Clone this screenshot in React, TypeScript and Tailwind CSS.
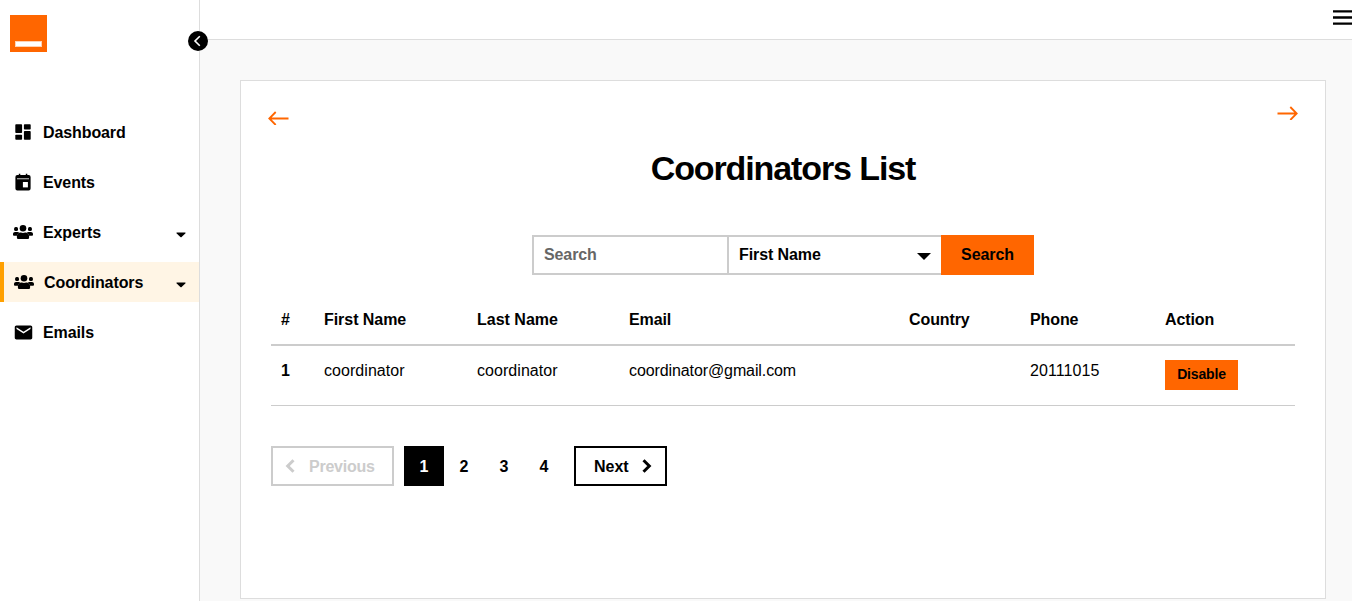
import React from "react";
import { MdEmail } from "react-icons/md";

function DashboardIcon() {
  return (
    <svg width="20" height="20" viewBox="0 0 20 20">
      <rect x="2.300" y="2.300" width="6.800" height="8.700" rx=".8" />
      <rect x="2.300" y="12.700" width="6.800" height="5" rx=".8" />
      <rect x="10.900" y="2.300" width="6.800" height="5.200" rx=".8" />
      <rect x="10.900" y="9.100" width="6.800" height="8.600" rx=".8" />
    </svg>
  );
}

function CalendarIcon() {
  return (
    <svg width="20" height="20" viewBox="0 0 20 20">
      <path d="M4.500 3h11a2 2 0 0 1 2.100 2v11.400a2 2 0 0 1-2.100 2h-11a2 2 0 0 1-2.100-2V5a2 2 0 0 1 2.100-2Z" />
      <path d="M5.800 1.700h1.500v2H5.800zM12.800 1.700h1.500v2h-1.500z" />
      <path d="M4 6.200h12v1.100H4z" fill="#bbb" />
      <path d="M9.900 10h5v5.400h-5z" fill="white" />
    </svg>
  );
}

function GroupIcon() {
  return (
    <svg width="20" height="20" viewBox="0 0 20 20">
      <circle cx="10" cy="6.300" r="3.300" />
      <rect x="1.100" y="5" width="3.900" height="3.900" rx="1.500" />
      <rect x="15" y="5" width="3.900" height="3.900" rx="1.500" />
      <path d="M2 10h2.600c.7 0 1.300.3 1.600.7C5 11.400 4.200 12.500 4 13.700H.9c-.6 0-.9-.3-.9-.9V12c0-1.100.9-2 2-2ZM18 10h-2.600c-.7 0-1.300.3-1.600.7 1.200.7 2 1.800 2.200 3h3.100c.6 0 .9-.3.9-.9V12c0-1.100-.9-2-2-2Z" />
      <path d="M7.500 10.500h.4c1.300.6 2.900.6 4.200 0h.4c2 0 3.600 1.600 3.600 3.600v1.300c0 .9-.7 1.600-1.600 1.600h-9c-.9 0-1.600-.7-1.600-1.600v-1.300c0-2 1.600-3.600 3.600-3.600Z" />
    </svg>
  );
}

type NavItem = {
  label: string;
  icon: React.ReactNode;
  expandable?: boolean;
  active?: boolean;
};

const navItems: NavItem[] = [
  { label: "Dashboard", icon: <DashboardIcon /> },
  { label: "Events", icon: <CalendarIcon /> },
  { label: "Experts", icon: <GroupIcon />, expandable: true },
  { label: "Coordinators", icon: <GroupIcon />, expandable: true, active: true },
  { label: "Emails", icon: <MdEmail size={21} className="-mr-px" /> },
];

function Caret() {
  return (
    <svg width="10" height="6" viewBox="0 0 10 6">
      <path d="M1 .5h8c.5 0 .7.6.3 1L5.600 5a.9.9 0 0 1-1.200 0L.7 1.500C.3 1.100.500.500 1 .500Z" />
    </svg>
  );
}

function Sidebar() {
  return (
    <aside className="relative w-[200px] shrink-0 border-r border-[#ddd] bg-white pt-[15px]">
      <div className="ml-[10px] flex h-[37px] w-[37px] items-end justify-center bg-[#ff6600] pb-[5px]">
        <div className="h-[6px] w-[27px] border border-[#ffd1b3] bg-white" />
      </div>
      <button className="absolute top-[31px] left-[188px] flex h-5 w-5 items-center justify-center rounded-full bg-black">
        <svg width="20" height="20" viewBox="0 0 20 20" fill="none" stroke="white" strokeWidth="1.6">
          <path d="M11.800 5.300 7 10l4.800 4.700" />
        </svg>
      </button>
      <nav className="mt-[60px] flex flex-col gap-[10px]">
        {navItems.map((item) => (
          <a
            key={item.label}
            className={
              "flex h-10 items-center " +
              (item.active ? "border-l-4 border-[#ffa000] bg-[#fff5e5] pl-[10px]" : "pl-[13px]")
            }
          >
            {item.icon}
            <span className="ml-[10px] flex-1 pt-0.5 text-[16px] leading-6 font-bold">{item.label}</span>
            {item.expandable && (
              <span className="mt-[5px] mr-[13px]">
                <Caret />
              </span>
            )}
          </a>
        ))}
      </nav>
    </aside>
  );
}

function SearchBar() {
  return (
    <div className="ml-[261px] flex h-10 w-[502px] font-bold">
      <div className="flex w-[197px] items-center border-2 border-[#ccc] pl-[10px] text-[#666]">
        <span>Search</span>
      </div>
      <div className="flex w-[212px] items-center justify-between border-y-2 border-[#ccc] pr-[10px] pl-[10px]">
        <span>First Name</span>
        <svg width="14" height="7" viewBox="0 0 14 7" className="mt-0.5">
          <path d="M0 0h14L7 7Z" />
        </svg>
      </div>
      <button className="flex flex-1 items-center justify-center bg-[#ff6600] font-bold">
        <span>Search</span>
      </button>
    </div>
  );
}

const columns = "grid grid-cols-[43px_153px_152px_280px_121px_135px_140px]";

function CoordinatorsTable() {
  return (
    <div className="mt-[25px] w-[1024px]">
      <div className={columns + " h-[46px] border-b-2 border-[#ccc] pt-[8px] pl-[10px] leading-6 font-bold"}>
        <span>#</span>
        <span className="tracking-[-0.05px]">First Name</span>
        <span className="tracking-normal">Last Name</span>
        <span>Email</span>
        <span>Country</span>
        <span>Phone</span>
        <span>Action</span>
      </div>
      <div className={columns + " h-[60px] border-b border-[#ccc] pt-[13px] pl-[10px] leading-6"}>
        <span className="font-bold">1</span>
        <span className="tracking-[0.05px]">coordinator</span>
        <span className="tracking-[0.05px]">coordinator</span>
        <span className="tracking-[-0.1px]">coordinator@gmail.com</span>
        <span />
        <span className="tracking-[0.1px]">20111015</span>
        <button className="mt-[1px] flex h-[30px] w-[73px] items-center justify-center bg-[#ff6600] text-[14px] font-bold tracking-[-0.15px]">
          <span className="-mt-0.5">Disable</span>
        </button>
      </div>
    </div>
  );
}

function Pagination() {
  return (
    <div className="mt-10 flex h-10 font-bold">
      <button className="mr-[10px] flex w-[123px] items-center border-2 border-[#ccc] pl-[12px] text-[#ccc]">
        <svg width="10" height="14" viewBox="0 0 10 14" fill="none" stroke="currentColor" strokeWidth="3">
          <path d="M8.500 1.200 2.700 7l5.800 5.800" />
        </svg>
        <span className="mt-0.5 ml-[14px] tracking-[-0.25px]">Previous</span>
      </button>
      <span className="flex w-10 items-center justify-center bg-black pt-0.5 text-white">1</span>
      <span className="flex w-10 items-center justify-center pt-0.5">2</span>
      <span className="flex w-10 items-center justify-center pt-0.5">3</span>
      <span className="flex w-10 items-center justify-center pt-0.5">4</span>
      <button className="ml-[10px] flex w-[93px] items-center border-2 border-black pl-[18px]">
        <span className="mt-0.5 tracking-normal">Next</span>
        <svg width="10" height="14" viewBox="0 0 10 14" fill="none" stroke="currentColor" strokeWidth="3" className="ml-[13px]">
          <path d="M1.500 1.200 7.300 7l-5.800 5.800" />
        </svg>
      </button>
    </div>
  );
}

export default function App() {
  return (
    <div className="flex h-[601px] w-full overflow-hidden bg-[#f9f9f9] font-['Liberation_Sans',Arial,sans-serif] text-[16px] tracking-[-0.1px] text-black">
      <Sidebar />
      <div className="flex min-w-0 flex-1 flex-col">
        <header className="flex h-10 shrink-0 justify-end border-b border-[#ddd] bg-white pt-[10px]">
          <svg width="19" height="16" viewBox="0 0 19 16" fill="none" stroke="black" strokeWidth="2.300">
            <path d="M0 1.400h19M0 7.500h19M0 13.700h19" />
          </svg>
        </header>
        <main className="mt-10 ml-10 h-[519px] w-[1086px] border border-[#ddd] bg-white px-[30px] pt-[22px]">
          <div className="-mx-[3px] flex h-[32px] items-start justify-between text-[#ff6600]">
            <svg width="21" height="14" viewBox="0 0 21 14" fill="none" stroke="currentColor" strokeWidth="1.800" className="mt-[8px]">
              <path d="M1.300 7.500H20.500M7.700 1 1.300 7.500 7.700 14" />
            </svg>
            <svg width="21" height="14" viewBox="0 0 21 14" fill="none" stroke="currentColor" strokeWidth="1.800" className="mt-[3px]">
              <path d="M.5 7.500H19.700M13.300 1l6.400 6.500-6.400 6.500" />
            </svg>
          </div>
          <h1 className="mt-[12px] text-center text-[34px] leading-[42px] font-bold tracking-[-1.1px]">
            Coordinators List
          </h1>
          <div className="mt-[46px]">
            <SearchBar />
          </div>
          <CoordinatorsTable />
          <Pagination />
        </main>
      </div>
    </div>
  );
}
